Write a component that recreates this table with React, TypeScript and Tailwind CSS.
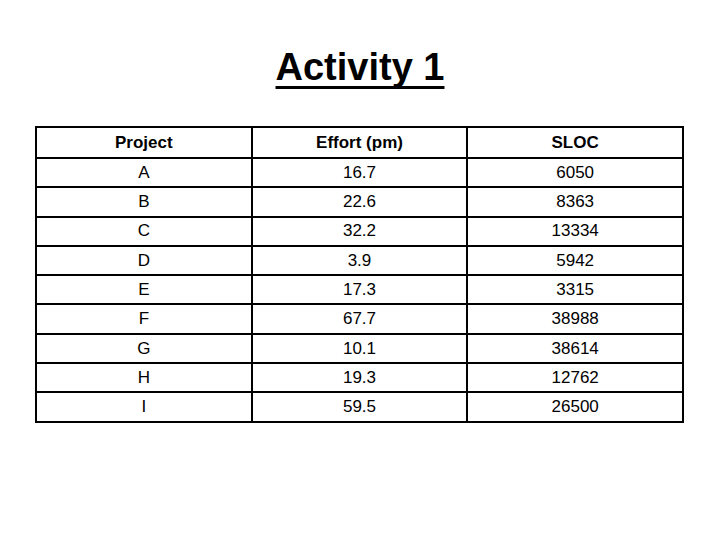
const rows: [string, string, string][] = [
  ["A", "16.7", "6050"],
  ["B", "22.6", "8363"],
  ["C", "32.2", "13334"],
  ["D", "3.9", "5942"],
  ["E", "17.3", "3315"],
  ["F", "67.7", "38988"],
  ["G", "10.1", "38614"],
  ["H", "19.3", "12762"],
  ["I", "59.5", "26500"],
];

export default function App() {
  return (
    <div className="w-[720px] h-[540px] bg-white text-black font-['Liberation_Sans',Arial,sans-serif]">
      <div className="pt-[45px] text-center">
        <h1 className="text-[38px] leading-[44px] font-bold underline decoration-[3px] underline-offset-[6px] [text-decoration-skip-ink:none]">
          Activity 1
        </h1>
      </div>
      <table className="mt-[37px] ml-[35px] w-[649px] border-collapse border-[2.5px] border-black text-[17px] text-center">
        <thead>
          <tr className="h-[31px]">
            <th className="w-1/3 border-2 border-black font-bold">Project</th>
            <th className="w-1/3 border-2 border-black font-bold">Effort (pm)</th>
            <th className="w-1/3 border-2 border-black font-bold">SLOC</th>
          </tr>
        </thead>
        <tbody>
          {rows.map(([p, e, s]) => (
            <tr key={p} className="h-[29.3px]">
              <td className="border-2 border-black">{p}</td>
              <td className="border-2 border-black">{e}</td>
              <td className="border-2 border-black">{s}</td>
            </tr>
          ))}
        </tbody>
      </table>
    </div>
  );
}
